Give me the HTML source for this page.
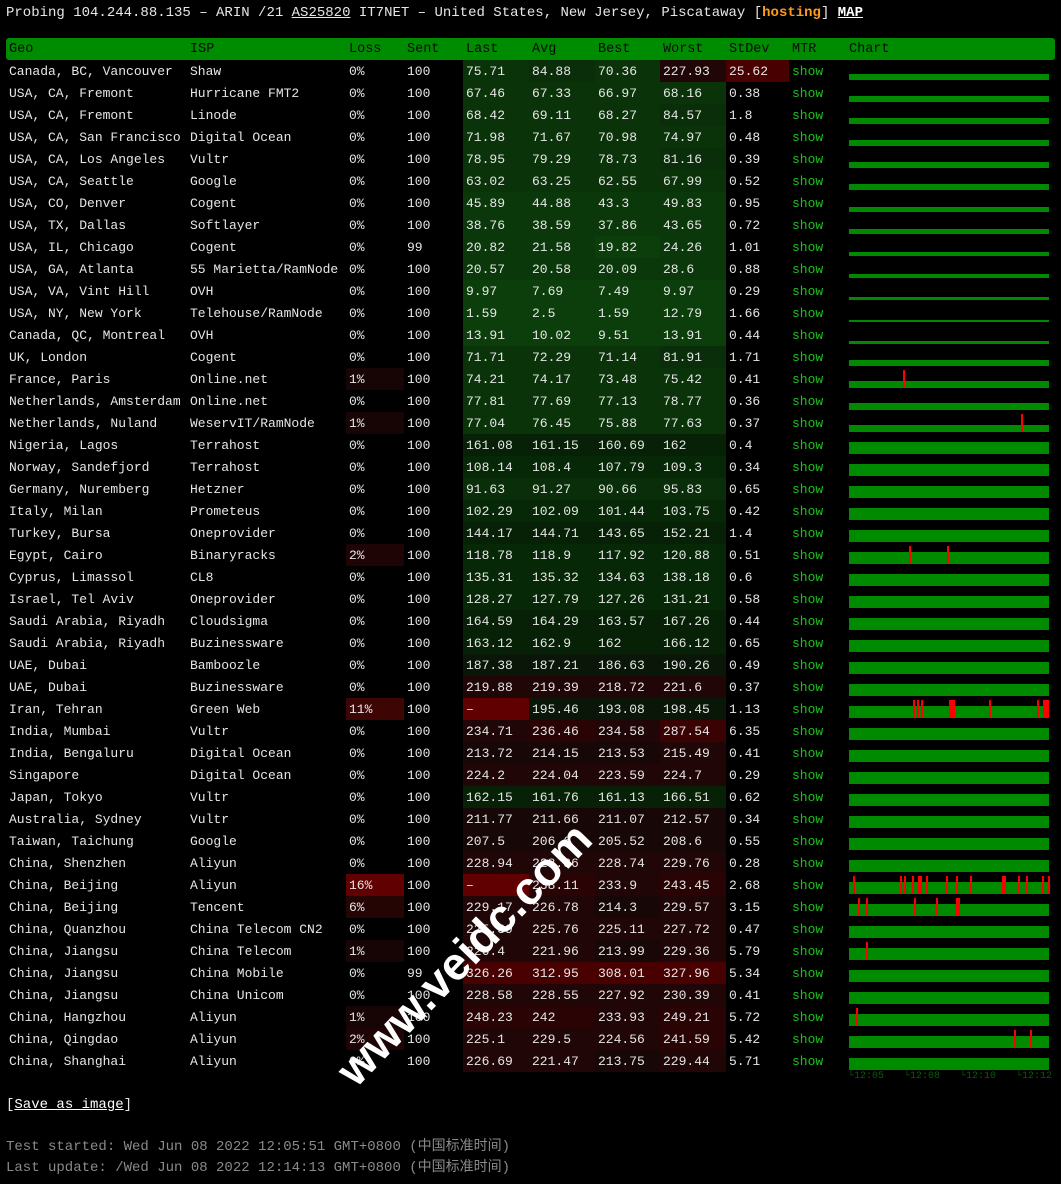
<!DOCTYPE html>
<html><head><meta charset="utf-8"><style>
*{margin:0;padding:0;box-sizing:border-box}
body{width:1061px;height:1184px;background:#000;color:#e6e6e6;font-family:"Liberation Mono","Noto Sans CJK SC",monospace;font-size:13px;position:relative;overflow:hidden}
.top{position:absolute;left:6px;top:4px;line-height:18px;white-space:pre;font-size:14px}
.top u{text-decoration:underline}
.top .h{color:#ff9a1f;font-weight:bold}
.top b{font-weight:bold;text-decoration:underline;color:#fff}
table{position:absolute;left:6px;top:38px;border-collapse:collapse;table-layout:fixed;width:1049px}
td,th{height:22px;padding:0 0 0 3px;white-space:nowrap;overflow:hidden;text-align:left;font-weight:normal;vertical-align:middle}
th{background:#008c00;color:#0a0a0a;font-size:13.5px}
tr.hd th:first-child{border-radius:3px 0 0 3px}
tr.hd th:last-child{border-radius:0 3px 3px 0}
.s{color:#1ec01e}
.ch{position:relative;padding:0}
.b{position:absolute;left:3px;width:200px;bottom:2px;height:12px;background:#008a00}
.t{height:6px}
.r{position:absolute;width:2px;top:2px;bottom:2px;background:#f00}
.A{background:#0c3e0c}.B{background:#0b380b}.C{background:#0a330a}.D{background:#092e09}.E{background:#072807}.F{background:#062106}.G{background:#091608}.H{background:#180707}.I{background:#200606}.J{background:#2a0404}.K{background:#3a0202}.L{background:#480000}.X{background:#600000}
.l1{background:#170404}.l2{background:#1e0404}.l6{background:#250404}.l11{background:#3e0505}
.foot{position:absolute;left:6px;top:1096px;line-height:18px;font-size:14px}
.foot u{color:#fff}
.info{position:absolute;left:6px;top:1137px;line-height:21px;color:#8a8a8a;white-space:pre;font-size:14px}
.tl{position:absolute;top:1071px;font-size:10px;color:#0a5a0a}
.wm{position:absolute;left:292px;top:927px;font-family:"Liberation Sans",sans-serif;font-weight:bold;font-size:46px;color:#fff;transform:rotate(-46deg);transform-origin:center;white-space:nowrap}
</style></head><body>
<div class="top">Probing 104.244.88.135 – ARIN /21 <u>AS25820</u> IT7NET – United States, New Jersey, Piscataway [<span class="h">hosting</span>] <b>MAP</b></div>
<table>
<colgroup><col style="width:181px"><col style="width:159px"><col style="width:58px"><col style="width:59px"><col style="width:66px"><col style="width:66px"><col style="width:65px"><col style="width:66px"><col style="width:63px"><col style="width:57px"><col style="width:209px"></colgroup>
<tr class="hd"><th>Geo</th><th>ISP</th><th>Loss</th><th>Sent</th><th>Last</th><th>Avg</th><th>Best</th><th>Worst</th><th>StDev</th><th>MTR</th><th>Chart</th></tr>
<tr><td>Canada, BC, Vancouver</td><td>Shaw</td><td>0%</td><td>100</td><td class="C">75.71</td><td class="D">84.88</td><td class="C">70.36</td><td class="I">227.93</td><td class="L">25.62</td><td class="s">show</td><td class="ch"><div class="b t"></div></td></tr>
<tr><td>USA, CA, Fremont</td><td>Hurricane FMT2</td><td>0%</td><td>100</td><td class="C">67.46</td><td class="C">67.33</td><td class="C">66.97</td><td class="C">68.16</td><td>0.38</td><td class="s">show</td><td class="ch"><div class="b t"></div></td></tr>
<tr><td>USA, CA, Fremont</td><td>Linode</td><td>0%</td><td>100</td><td class="C">68.42</td><td class="C">69.11</td><td class="C">68.27</td><td class="D">84.57</td><td>1.8</td><td class="s">show</td><td class="ch"><div class="b t"></div></td></tr>
<tr><td>USA, CA, San Francisco</td><td>Digital Ocean</td><td>0%</td><td>100</td><td class="C">71.98</td><td class="C">71.67</td><td class="C">70.98</td><td class="C">74.97</td><td>0.48</td><td class="s">show</td><td class="ch"><div class="b t"></div></td></tr>
<tr><td>USA, CA, Los Angeles</td><td>Vultr</td><td>0%</td><td>100</td><td class="C">78.95</td><td class="C">79.29</td><td class="C">78.73</td><td class="D">81.16</td><td>0.39</td><td class="s">show</td><td class="ch"><div class="b t"></div></td></tr>
<tr><td>USA, CA, Seattle</td><td>Google</td><td>0%</td><td>100</td><td class="C">63.02</td><td class="C">63.25</td><td class="C">62.55</td><td class="C">67.99</td><td>0.52</td><td class="s">show</td><td class="ch"><div class="b t"></div></td></tr>
<tr><td>USA, CO, Denver</td><td>Cogent</td><td>0%</td><td>100</td><td class="B">45.89</td><td class="B">44.88</td><td class="B">43.3</td><td class="B">49.83</td><td>0.95</td><td class="s">show</td><td class="ch"><div class="b t" style="height:5px"></div></td></tr>
<tr><td>USA, TX, Dallas</td><td>Softlayer</td><td>0%</td><td>100</td><td class="B">38.76</td><td class="B">38.59</td><td class="B">37.86</td><td class="B">43.65</td><td>0.72</td><td class="s">show</td><td class="ch"><div class="b t" style="height:5px"></div></td></tr>
<tr><td>USA, IL, Chicago</td><td>Cogent</td><td>0%</td><td>99</td><td class="B">20.82</td><td class="B">21.58</td><td class="A">19.82</td><td class="B">24.26</td><td>1.01</td><td class="s">show</td><td class="ch"><div class="b t" style="height:4px"></div></td></tr>
<tr><td>USA, GA, Atlanta</td><td>55 Marietta/RamNode</td><td>0%</td><td>100</td><td class="B">20.57</td><td class="B">20.58</td><td class="B">20.09</td><td class="B">28.6</td><td>0.88</td><td class="s">show</td><td class="ch"><div class="b t" style="height:4px"></div></td></tr>
<tr><td>USA, VA, Vint Hill</td><td>OVH</td><td>0%</td><td>100</td><td class="A">9.97</td><td class="A">7.69</td><td class="A">7.49</td><td class="A">9.97</td><td>0.29</td><td class="s">show</td><td class="ch"><div class="b t" style="height:3px"></div></td></tr>
<tr><td>USA, NY, New York</td><td>Telehouse/RamNode</td><td>0%</td><td>100</td><td class="A">1.59</td><td class="A">2.5</td><td class="A">1.59</td><td class="A">12.79</td><td>1.66</td><td class="s">show</td><td class="ch"><div class="b t" style="height:2px"></div></td></tr>
<tr><td>Canada, QC, Montreal</td><td>OVH</td><td>0%</td><td>100</td><td class="A">13.91</td><td class="A">10.02</td><td class="A">9.51</td><td class="A">13.91</td><td>0.44</td><td class="s">show</td><td class="ch"><div class="b t" style="height:3px"></div></td></tr>
<tr><td>UK, London</td><td>Cogent</td><td>0%</td><td>100</td><td class="C">71.71</td><td class="C">72.29</td><td class="C">71.14</td><td class="D">81.91</td><td>1.71</td><td class="s">show</td><td class="ch"><div class="b t"></div></td></tr>
<tr><td>France, Paris</td><td>Online.net</td><td class="l1">1%</td><td>100</td><td class="C">74.21</td><td class="C">74.17</td><td class="C">73.48</td><td class="C">75.42</td><td>0.41</td><td class="s">show</td><td class="ch"><div class="b" style="height:7px"></div><div class="r" style="left:57px"></div></td></tr>
<tr><td>Netherlands, Amsterdam</td><td>Online.net</td><td>0%</td><td>100</td><td class="C">77.81</td><td class="C">77.69</td><td class="C">77.13</td><td class="C">78.77</td><td>0.36</td><td class="s">show</td><td class="ch"><div class="b" style="height:7px"></div></td></tr>
<tr><td>Netherlands, Nuland</td><td>WeservIT/RamNode</td><td class="l1">1%</td><td>100</td><td class="C">77.04</td><td class="C">76.45</td><td class="C">75.88</td><td class="C">77.63</td><td>0.37</td><td class="s">show</td><td class="ch"><div class="b" style="height:7px"></div><div class="r" style="left:175px"></div></td></tr>
<tr><td>Nigeria, Lagos</td><td>Terrahost</td><td>0%</td><td>100</td><td class="F">161.08</td><td class="F">161.15</td><td class="F">160.69</td><td class="F">162</td><td>0.4</td><td class="s">show</td><td class="ch"><div class="b"></div></td></tr>
<tr><td>Norway, Sandefjord</td><td>Terrahost</td><td>0%</td><td>100</td><td class="E">108.14</td><td class="E">108.4</td><td class="E">107.79</td><td class="E">109.3</td><td>0.34</td><td class="s">show</td><td class="ch"><div class="b"></div></td></tr>
<tr><td>Germany, Nuremberg</td><td>Hetzner</td><td>0%</td><td>100</td><td class="D">91.63</td><td class="D">91.27</td><td class="D">90.66</td><td class="D">95.83</td><td>0.65</td><td class="s">show</td><td class="ch"><div class="b"></div></td></tr>
<tr><td>Italy, Milan</td><td>Prometeus</td><td>0%</td><td>100</td><td class="E">102.29</td><td class="E">102.09</td><td class="E">101.44</td><td class="E">103.75</td><td>0.42</td><td class="s">show</td><td class="ch"><div class="b"></div></td></tr>
<tr><td>Turkey, Bursa</td><td>Oneprovider</td><td>0%</td><td>100</td><td class="F">144.17</td><td class="F">144.71</td><td class="F">143.65</td><td class="F">152.21</td><td>1.4</td><td class="s">show</td><td class="ch"><div class="b"></div></td></tr>
<tr><td>Egypt, Cairo</td><td>Binaryracks</td><td class="l2">2%</td><td>100</td><td class="E">118.78</td><td class="E">118.9</td><td class="E">117.92</td><td class="E">120.88</td><td>0.51</td><td class="s">show</td><td class="ch"><div class="b"></div><div class="r" style="left:63px"></div><div class="r" style="left:101px"></div></td></tr>
<tr><td>Cyprus, Limassol</td><td>CL8</td><td>0%</td><td>100</td><td class="E">135.31</td><td class="E">135.32</td><td class="E">134.63</td><td class="E">138.18</td><td>0.6</td><td class="s">show</td><td class="ch"><div class="b"></div></td></tr>
<tr><td>Israel, Tel Aviv</td><td>Oneprovider</td><td>0%</td><td>100</td><td class="E">128.27</td><td class="E">127.79</td><td class="E">127.26</td><td class="E">131.21</td><td>0.58</td><td class="s">show</td><td class="ch"><div class="b"></div></td></tr>
<tr><td>Saudi Arabia, Riyadh</td><td>Cloudsigma</td><td>0%</td><td>100</td><td class="F">164.59</td><td class="F">164.29</td><td class="F">163.57</td><td class="F">167.26</td><td>0.44</td><td class="s">show</td><td class="ch"><div class="b"></div></td></tr>
<tr><td>Saudi Arabia, Riyadh</td><td>Buzinessware</td><td>0%</td><td>100</td><td class="F">163.12</td><td class="F">162.9</td><td class="F">162</td><td class="F">166.12</td><td>0.65</td><td class="s">show</td><td class="ch"><div class="b"></div></td></tr>
<tr><td>UAE, Dubai</td><td>Bamboozle</td><td>0%</td><td>100</td><td class="G">187.38</td><td class="G">187.21</td><td class="G">186.63</td><td class="G">190.26</td><td>0.49</td><td class="s">show</td><td class="ch"><div class="b"></div></td></tr>
<tr><td>UAE, Dubai</td><td>Buzinessware</td><td>0%</td><td>100</td><td class="I">219.88</td><td class="I">219.39</td><td class="I">218.72</td><td class="I">221.6</td><td>0.37</td><td class="s">show</td><td class="ch"><div class="b"></div></td></tr>
<tr><td>Iran, Tehran</td><td>Green Web</td><td class="l11">11%</td><td>100</td><td class="X">–</td><td class="G">195.46</td><td class="G">193.08</td><td class="G">198.45</td><td>1.13</td><td class="s">show</td><td class="ch"><div class="b"></div><div class="r" style="left:67px"></div><div class="r" style="left:71px"></div><div class="r" style="left:75px"></div><div class="r" style="left:103px;width:6px"></div><div class="r" style="left:143px"></div><div class="r" style="left:191px"></div><div class="r" style="left:197px;width:6px"></div></td></tr>
<tr><td>India, Mumbai</td><td>Vultr</td><td>0%</td><td>100</td><td class="I">234.71</td><td class="J">236.46</td><td class="I">234.58</td><td class="K">287.54</td><td>6.35</td><td class="s">show</td><td class="ch"><div class="b"></div></td></tr>
<tr><td>India, Bengaluru</td><td>Digital Ocean</td><td>0%</td><td>100</td><td class="H">213.72</td><td class="H">214.15</td><td class="H">213.53</td><td class="I">215.49</td><td>0.41</td><td class="s">show</td><td class="ch"><div class="b"></div></td></tr>
<tr><td>Singapore</td><td>Digital Ocean</td><td>0%</td><td>100</td><td class="I">224.2</td><td class="I">224.04</td><td class="I">223.59</td><td class="I">224.7</td><td>0.29</td><td class="s">show</td><td class="ch"><div class="b"></div></td></tr>
<tr><td>Japan, Tokyo</td><td>Vultr</td><td>0%</td><td>100</td><td class="F">162.15</td><td class="F">161.76</td><td class="F">161.13</td><td class="F">166.51</td><td>0.62</td><td class="s">show</td><td class="ch"><div class="b"></div></td></tr>
<tr><td>Australia, Sydney</td><td>Vultr</td><td>0%</td><td>100</td><td class="H">211.77</td><td class="H">211.66</td><td class="H">211.07</td><td class="H">212.57</td><td>0.34</td><td class="s">show</td><td class="ch"><div class="b"></div></td></tr>
<tr><td>Taiwan, Taichung</td><td>Google</td><td>0%</td><td>100</td><td class="H">207.5</td><td class="H">206.6</td><td class="H">205.52</td><td class="H">208.6</td><td>0.55</td><td class="s">show</td><td class="ch"><div class="b"></div></td></tr>
<tr><td>China, Shenzhen</td><td>Aliyun</td><td>0%</td><td>100</td><td class="I">228.94</td><td class="I">228.86</td><td class="I">228.74</td><td class="I">229.76</td><td>0.28</td><td class="s">show</td><td class="ch"><div class="b"></div></td></tr>
<tr><td>China, Beijing</td><td>Aliyun</td><td class="X">16%</td><td>100</td><td class="X">–</td><td class="J">238.11</td><td class="I">233.9</td><td class="J">243.45</td><td>2.68</td><td class="s">show</td><td class="ch"><div class="b"></div><div class="r" style="left:7px"></div><div class="r" style="left:54px"></div><div class="r" style="left:58px"></div><div class="r" style="left:66px"></div><div class="r" style="left:72px;width:4px"></div><div class="r" style="left:80px"></div><div class="r" style="left:100px"></div><div class="r" style="left:110px"></div><div class="r" style="left:124px"></div><div class="r" style="left:156px;width:4px"></div><div class="r" style="left:172px"></div><div class="r" style="left:180px"></div><div class="r" style="left:196px"></div><div class="r" style="left:202px"></div></td></tr>
<tr><td>China, Beijing</td><td>Tencent</td><td class="l6">6%</td><td>100</td><td class="I">229.17</td><td class="I">226.78</td><td class="H">214.3</td><td class="I">229.57</td><td>3.15</td><td class="s">show</td><td class="ch"><div class="b"></div><div class="r" style="left:12px"></div><div class="r" style="left:20px"></div><div class="r" style="left:68px"></div><div class="r" style="left:90px"></div><div class="r" style="left:110px;width:4px"></div></td></tr>
<tr><td>China, Quanzhou</td><td>China Telecom CN2</td><td>0%</td><td>100</td><td class="I">225.39</td><td class="I">225.76</td><td class="I">225.11</td><td class="I">227.72</td><td>0.47</td><td class="s">show</td><td class="ch"><div class="b"></div></td></tr>
<tr><td>China, Jiangsu</td><td>China Telecom</td><td class="l1">1%</td><td>100</td><td class="I">226.4</td><td class="I">221.96</td><td class="H">213.99</td><td class="I">229.36</td><td>5.79</td><td class="s">show</td><td class="ch"><div class="b"></div><div class="r" style="left:20px"></div></td></tr>
<tr><td>China, Jiangsu</td><td>China Mobile</td><td>0%</td><td>99</td><td class="L">326.26</td><td class="L">312.95</td><td class="L">308.01</td><td class="L">327.96</td><td>5.34</td><td class="s">show</td><td class="ch"><div class="b"></div></td></tr>
<tr><td>China, Jiangsu</td><td>China Unicom</td><td>0%</td><td>100</td><td class="I">228.58</td><td class="I">228.55</td><td class="I">227.92</td><td class="I">230.39</td><td>0.41</td><td class="s">show</td><td class="ch"><div class="b"></div></td></tr>
<tr><td>China, Hangzhou</td><td>Aliyun</td><td class="l1">1%</td><td>100</td><td class="J">248.23</td><td class="J">242</td><td class="I">233.93</td><td class="J">249.21</td><td>5.72</td><td class="s">show</td><td class="ch"><div class="b"></div><div class="r" style="left:10px"></div></td></tr>
<tr><td>China, Qingdao</td><td>Aliyun</td><td class="l2">2%</td><td>100</td><td class="I">225.1</td><td class="I">229.5</td><td class="I">224.56</td><td class="J">241.59</td><td>5.42</td><td class="s">show</td><td class="ch"><div class="b"></div><div class="r" style="left:168px"></div><div class="r" style="left:184px"></div></td></tr>
<tr><td>China, Shanghai</td><td>Aliyun</td><td>0%</td><td>100</td><td class="I">226.69</td><td class="I">221.47</td><td class="H">213.75</td><td class="I">229.44</td><td>5.71</td><td class="s">show</td><td class="ch"><div class="b"></div></td></tr>
</table>
<div class="tl" style="left:848px">└12:05</div><div class="tl" style="left:904px">└12:08</div><div class="tl" style="left:960px">└12:10</div><div class="tl" style="left:1016px">└12:12</div>
<div class="foot">[<u>Save as image</u>]</div>
<div class="info">Test started: Wed Jun 08 2022 12:05:51 GMT+0800 (中国标准时间)
Last update: /Wed Jun 08 2022 12:14:13 GMT+0800 (中国标准时间)</div>
<div class="wm">www.veidc.com</div>
</body></html>
